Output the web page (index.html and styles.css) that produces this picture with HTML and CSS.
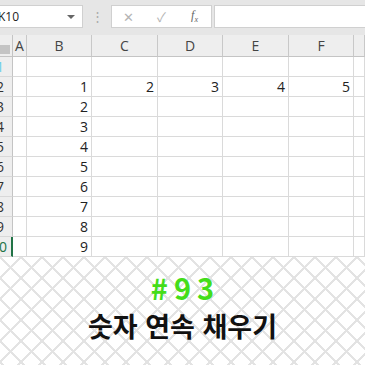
FILE: index.html
```html
<!DOCTYPE html>
<html lang="ko">
<head>
    <meta charset="UTF-8">
    <meta name="viewport" content="width=device-width, initial-scale=1.0">
    <title>#93 숫자 연속 채우기</title>
    <link rel="stylesheet" href="styles.css">
</head>
<body>
    <div class="toolbar">
        <div class="namebox">
            <span class="name">K10</span>
            <span class="drop"></span>
        </div>
        <div class="grip">⋮</div>
        <div class="fbuttons">
            <span class="fb cancel">✕</span>
            <span class="fb enter">✓</span>
            <span class="fb fx">f<sub>x</sub></span>
        </div>
        <div class="finput"></div>
    </div>

    <div class="sheet">
        <div class="row head">
            <div class="rh corner"><span class="tri"></span></div>
            <div class="ch">A</div>
            <div class="ch">B</div>
            <div class="ch">C</div>
            <div class="ch">D</div>
            <div class="ch">E</div>
            <div class="ch">F</div>
            <div class="ch"></div>
        </div>
        <div class="row">
            <div class="rh first"><span>1</span></div>
            <div class="c"></div><div class="c"></div><div class="c"></div><div class="c"></div><div class="c"></div><div class="c"></div><div class="c"></div>
        </div>
        <div class="row">
            <div class="rh"><span>2</span></div>
            <div class="c"></div><div class="c">1</div><div class="c">2</div><div class="c">3</div><div class="c">4</div><div class="c">5</div><div class="c"></div>
        </div>
        <div class="row">
            <div class="rh"><span>3</span></div>
            <div class="c"></div><div class="c">2</div><div class="c"></div><div class="c"></div><div class="c"></div><div class="c"></div><div class="c"></div>
        </div>
        <div class="row">
            <div class="rh"><span>4</span></div>
            <div class="c"></div><div class="c">3</div><div class="c"></div><div class="c"></div><div class="c"></div><div class="c"></div><div class="c"></div>
        </div>
        <div class="row">
            <div class="rh"><span>5</span></div>
            <div class="c"></div><div class="c">4</div><div class="c"></div><div class="c"></div><div class="c"></div><div class="c"></div><div class="c"></div>
        </div>
        <div class="row">
            <div class="rh"><span>6</span></div>
            <div class="c"></div><div class="c">5</div><div class="c"></div><div class="c"></div><div class="c"></div><div class="c"></div><div class="c"></div>
        </div>
        <div class="row">
            <div class="rh"><span>7</span></div>
            <div class="c"></div><div class="c">6</div><div class="c"></div><div class="c"></div><div class="c"></div><div class="c"></div><div class="c"></div>
        </div>
        <div class="row">
            <div class="rh"><span>8</span></div>
            <div class="c"></div><div class="c">7</div><div class="c"></div><div class="c"></div><div class="c"></div><div class="c"></div><div class="c"></div>
        </div>
        <div class="row">
            <div class="rh"><span>9</span></div>
            <div class="c"></div><div class="c">8</div><div class="c"></div><div class="c"></div><div class="c"></div><div class="c"></div><div class="c"></div>
        </div>
        <div class="row">
            <div class="rh active"><span>10</span></div>
            <div class="c"></div><div class="c">9</div><div class="c"></div><div class="c"></div><div class="c"></div><div class="c"></div><div class="c"></div>
        </div>
    </div>

    <div class="banner">
        <div class="num">#93</div>
        <div class="title">숫자 연속 채우기</div>
    </div>
</body>
</html>
```

FILE: styles.css
```css
body {
    margin: 0;
    width: 365px;
    height: 365px;
    overflow: hidden;
    background: #fff;
    font-family: "Open Sans", "Liberation Sans", sans-serif;
}

/* formula bar */
.toolbar {
    display: flex;
    align-items: flex-start;
    height: 35px;
    padding-top: 5px;
    box-sizing: border-box;
    background: #e6e6e6;
}
.namebox {
    display: flex;
    align-items: center;
    justify-content: space-between;
    width: 92px;
    height: 23px;
    margin-left: -9px;
    padding: 0 7px 0 6px;
    box-sizing: border-box;
    background: #fff;
    border: 1px solid #d0d0d0;
    font-size: 12px;
    color: #222;
}
.drop {
    width: 0;
    height: 0;
    border-left: 4px solid transparent;
    border-right: 4px solid transparent;
    border-top: 4px solid #666;
}
.grip {
    width: 28px;
    text-align: center;
    color: #aaa;
    font-size: 13px;
    line-height: 23px;
}
.fbuttons {
    display: flex;
    align-items: center;
    width: 101px;
    height: 23px;
    box-sizing: border-box;
    background: #fff;
    border: 1px solid #d0d0d0;
}
.fb {
    width: 33px;
    text-align: center;
    color: #b4b4b4;
    font-size: 13px;
}
.fx {
    font-family: "Liberation Serif", serif;
    font-style: italic;
    color: #666;
    font-size: 12px;
}
.fx sub {
    font-size: 8px;
}
.finput {
    flex: 1;
    height: 23px;
    margin-left: 2px;
    box-sizing: border-box;
    background: #fff;
    border: 1px solid #d0d0d0;
    border-right: none;
}

/* grid */
.row {
    display: grid;
    grid-template-columns: 13px 14px 65px 66px 65px 66px 65px 1fr;
    height: 20px;
}
.row.head {
    height: 22px;
    background: #eeeeee;
}
.c, .ch, .rh {
    box-sizing: border-box;
    border-right: 1px solid #dadada;
    border-bottom: 1px solid #dadada;
}
.c {
    text-align: right;
    padding-right: 3px;
    font-size: 14px;
    line-height: 19px;
    color: #222;
}
.ch {
    position: relative;
    text-align: center;
    font-size: 14px;
    line-height: 21px;
    color: #444;
    border-right: 1px solid #c8c8c8;
    border-bottom: 1px solid #c4c4c4;
}
.rh {
    position: relative;
    overflow: hidden;
    background: #eeeeee;
    border-right: 1px solid #c4c4c4;
    border-bottom: 1px solid #d8d8d8;
    font-size: 14px;
    line-height: 19px;
    color: #333;
}
.rh span {
    display: block;
    width: 24px;
    margin-left: -12px;
    text-align: center;
}
.rh.first span {
    color: #6ccdea;
}
.rh.active {
    border-right: 2px solid #217346;
}
.rh.active span {
    color: #217346;
    margin-left: -13px;
}
.corner {
    border-bottom: 1px solid #c4c4c4;
}
.tri {
    position: absolute;
    right: 2px;
    bottom: 2px;
    width: 0;
    height: 0;
    border-left: 9px solid transparent;
    border-bottom: 9px solid #c4c4c4;
}

/* title area */
.banner {
    height: 108px;
    display: flex;
    flex-direction: column;
    align-items: center;
    padding-top: 15px;
    box-sizing: border-box;
    background-color: #fff;
    background-image:
        linear-gradient(45deg, transparent 47%, #e3e3e3 47%, #e3e3e3 53%, transparent 53%),
        linear-gradient(-45deg, transparent 47%, #e3e3e3 47%, #e3e3e3 53%, transparent 53%);
    background-size: 21px 21px;
    font-family: "Noto Sans CJK KR", "Noto Sans", sans-serif;
    font-weight: 700;
}
.num {
    color: #44dd1a;
    font-size: 29px;
    line-height: 30px;
    letter-spacing: 6px;
    margin-right: -6px;
}
.title {
    margin-top: 9px;
    color: #111;
    font-size: 27px;
    line-height: 30px;
}
```
